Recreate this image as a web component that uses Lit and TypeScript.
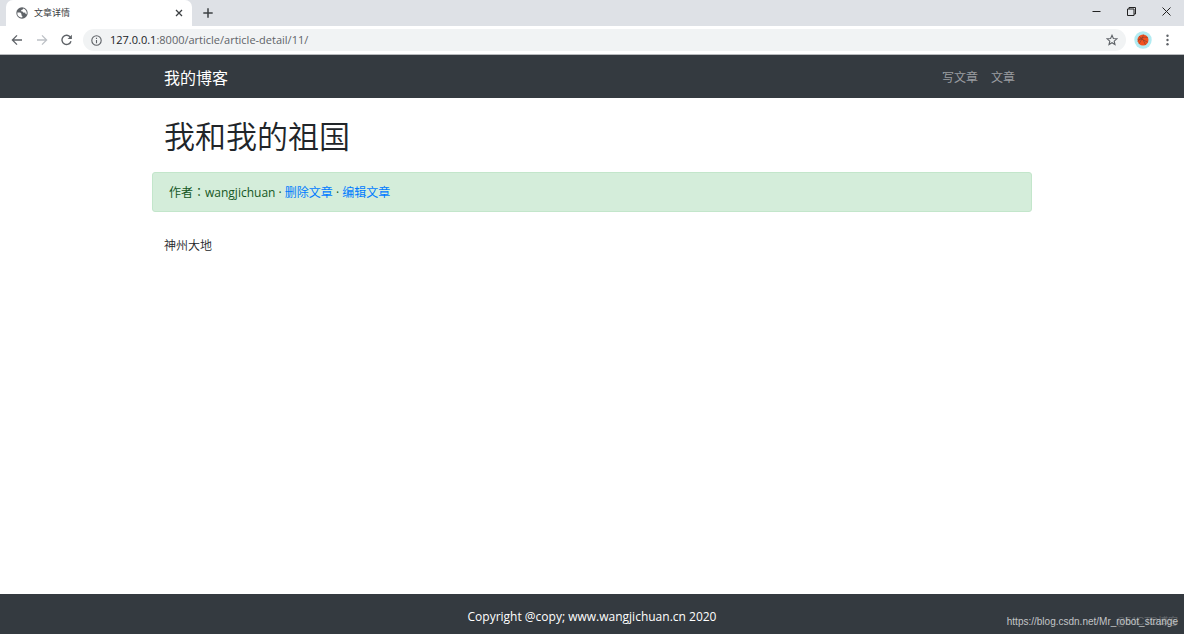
import { LitElement, html, css, svg } from "lit";
import { customElement, property } from "lit/decorators.js";

const globe = svg`<svg width="12" height="12" viewBox="0 0 12 12" aria-hidden="true">
  <circle cx="6" cy="6" r="5.7" fill="#5f6368"/>
  <path d="M1.3 5.4 4.3 5.6 5.6 7 5.3 8.2 6.4 9.1 6.2 10.6A4.7 4.7 0 0 1 1.3 5.4ZM7.2 1.5 6.8 2.6 5.3 3 5.1 4.3 6.5 4.5 7.6 5.7 9.2 5.6 9.6 7 10.6 7.2A4.7 4.7 0 0 0 7.2 1.5Z" fill="#fff"/>
</svg>`;

@customElement("browser-chrome")
export class BrowserChrome extends LitElement {
  @property() heading = "";
  @property() host = "";
  @property() path = "";

  static styles = css`
    :host { display: block; flex: none; font: 11px/16px "Open Sans", "Noto Sans CJK SC", sans-serif; }
    button { display: grid; place-items: center; flex: none; padding: 0; border: 0; background: none; color: #5f6368; }
    svg { display: block; }
    .tabs { display: flex; height: 26px; padding-left: 6px; background: #dee1e6; }
    .tab { display: flex; align-items: center; box-sizing: border-box; width: 186px; padding: 0 4px 0 10px; gap: 6px; border-radius: 7px 7px 0 0; background: #fff; color: #3c4043; font-size: 9px; }
    .name { flex: 1; }
    .close { width: 18px; height: 18px; color: #3c4043; }
    .new { width: 32px; color: #3c4043; }
    .window { display: flex; margin-left: auto; }
    .window button { width: 35px; height: 23px; color: #222; }
    .bar { display: flex; align-items: center; height: 28px; padding: 0 4px; border-bottom: 1px solid #b9bbbe; background: #fff; }
    .bar > button { width: 25px; height: 24px; }
    .bar > .back-off { color: #bdc1c6; }
    .address { display: flex; align-items: center; flex: 1; height: 22px; margin: 0 4px; padding: 0 4px 0 8px; border-radius: 11px; background: #f1f3f4; color: #5f6368; }
    .url { flex: 1; margin-left: 8px; }
    .url b { color: #202124; font-weight: 400; }
    .address button { width: 20px; height: 20px; }
  `;

  render() {
    return html`
      <div class="tabs">
        <div class="tab">
          ${globe}<span class="name">${this.heading}</span>
          <button class="close" aria-label="关闭标签页"><svg width="8" height="8" viewBox="0 0 8 8" fill="none" stroke="currentColor" stroke-width="1.3"><path d="M1 1 7 7M7 1 1 7"/></svg></button>
        </div>
        <button class="new" aria-label="打开新的标签页"><svg width="10" height="10" viewBox="0 0 10 10" fill="none" stroke="currentColor" stroke-width="1.5"><path d="M5 .3V9.7M.3 5H9.7"/></svg></button>
        <div class="window">
          <button aria-label="最小化"><svg width="9" height="9" viewBox="0 0 9 9" fill="none" stroke="currentColor"><path d="M.5 4.5H8.5"/></svg></button>
          <button aria-label="还原"><svg width="9" height="9" viewBox="0 0 9 9" fill="none" stroke="currentColor"><path d="M.5 2H7V8.5H.5ZM2 2V.5H8.5V7H7"/></svg></button>
          <button aria-label="关闭"><svg width="9" height="9" viewBox="0 0 9 9" fill="none" stroke="currentColor"><path d="M.5 .5 8.5 8.5M8.5 .5 .5 8.5"/></svg></button>
        </div>
      </div>
      <div class="bar">
        <button aria-label="后退"><svg width="12" height="12" viewBox="0 0 12 12" fill="none" stroke="currentColor" stroke-width="1.3"><path d="M11 6H1.6M6 1.4 1.4 6 6 10.6"/></svg></button>
        <button class="back-off" aria-label="前进"><svg width="12" height="12" viewBox="0 0 12 12" fill="none" stroke="currentColor" stroke-width="1.3"><path d="M1 6H10.4M6 1.4 10.6 6 6 10.6"/></svg></button>
        <button aria-label="重新加载"><svg width="12" height="12" viewBox="0 0 12 12" fill="none" stroke="currentColor" stroke-width="1.4"><path d="M9.4 3.3A4.6 4.6 0 1 0 10 7.2"/><path d="M10.9 .8V5.1H6.6Z" fill="currentColor" stroke="none"/></svg></button>
        <div class="address">
          <svg width="11" height="11" viewBox="0 0 11 11" fill="none" stroke="currentColor" stroke-width="1.1"><circle cx="5.5" cy="5.5" r="4.7"/><path d="M5.5 4.9V8.2M5.5 2.8V3.9"/></svg>
          <span class="url"><b>${this.host}</b>${this.path}</span>
          <button aria-label="为此网页添加书签"><svg width="12" height="12" viewBox="0 0 12 12" fill="none" stroke="currentColor" stroke-width="1.1"><path d="M6 1.3 7.4 4.5 10.9 4.8 8.2 7.1 9 10.5 6 8.7 3 10.5 3.8 7.1 1.1 4.8 4.6 4.5Z"/></svg></button>
        </div>
        <button aria-label="用户"><svg width="18" height="18" viewBox="0 0 18 18"><circle cx="9" cy="9" r="8.7" fill="#b2ebf2"/><circle cx="9" cy="9" r="5.5" fill="#f4511e"/><path d="M3.8 10.5Q7 5 13.8 6.5M5 5.3Q10 8 11.5 13.9M9.6 3.6Q8 9 5 12.8M3.6 8.2Q8 7 13.8 11.3" fill="none" stroke="#7d4030" stroke-width=".6"/></svg></button>
        <button aria-label="更多"><svg width="3" height="12" viewBox="0 0 3 12" fill="currentColor"><circle cx="1.5" cy="1.7" r="1.2"/><circle cx="1.5" cy="6" r="1.2"/><circle cx="1.5" cy="10.3" r="1.2"/></svg></button>
      </div>`;
  }
}

@customElement("app-root")
export class AppRoot extends LitElement {
  static styles = css`
    :host { display: flex; flex-direction: column; min-height: 100vh; background: #fff; color: #212529; font: 12px/18px "Open Sans", "Noto Sans CJK SC", sans-serif; }
    a { color: #007bff; text-decoration: none; }
    .container { box-sizing: border-box; width: 100%; max-width: 880px; margin: 0 auto; padding: 0 12px; }
    .navbar { background: #343a40; }
    .navbar .container { display: flex; align-items: flex-start; justify-content: space-between; padding-top: 11px; padding-bottom: 8px; }
    .brand { color: #fff; font-size: 16px; line-height: 24px; }
    .links { display: flex; gap: 13px; padding-right: 5px; line-height: 24px; }
    .links a { color: #9a9da0; }
    main { flex: 1; }
    h1 { margin: 19px 0 16px; font-size: 31px; font-weight: 350; line-height: 39px; }
    .alert { margin: 0 -12px; padding: 10px 16px 9px; border: 1px solid #c3e6cb; border-radius: 3px; background: #d4edda; color: #155724; }
    .colon { font-family: "Noto Sans CJK TC", sans-serif; }
    .body { margin: 25px 0 0; font-weight: 350; }
    footer { position: relative; padding: 14px 0 8px; background: #343a40; color: #fff; text-align: center; }
    footer p { margin: 0; }
    .mark { position: absolute; right: 6px; bottom: 4px; color: #c3c5c7; font: 10px/16px "Liberation Sans", sans-serif; }
    .stamp { position: absolute; right: 6px; bottom: 4px; color: #62676c; font: 10px/16px "Liberation Sans", "Noto Sans CJK SC", sans-serif; }
  `;

  render() {
    return html`
      <browser-chrome heading="文章详情" host="127.0.0.1" path=":8000/article/article-detail/11/"></browser-chrome>
      <nav class="navbar">
        <div class="container">
          <a class="brand" href="#">我的博客</a>
          <div class="links"><a href="#">写文章</a><a href="#">文章</a></div>
        </div>
      </nav>
      <main>
        <div class="container">
          <h1>我和我的祖国</h1>
          <div class="alert">作者<span class="colon">：</span>wangjichuan · <a href="#">删除文章</a> · <a href="#">编辑文章</a></div>
          <p class="body">神州大地</p>
        </div>
      </main>
      <footer>
        <p>Copyright @copy; www.wangjichuan.cn 2020</p>
        <span class="stamp">@51CTO博客</span>
        <span class="mark">https://blog.csdn.net/Mr_robot_strange</span>
      </footer>`;
  }
}
